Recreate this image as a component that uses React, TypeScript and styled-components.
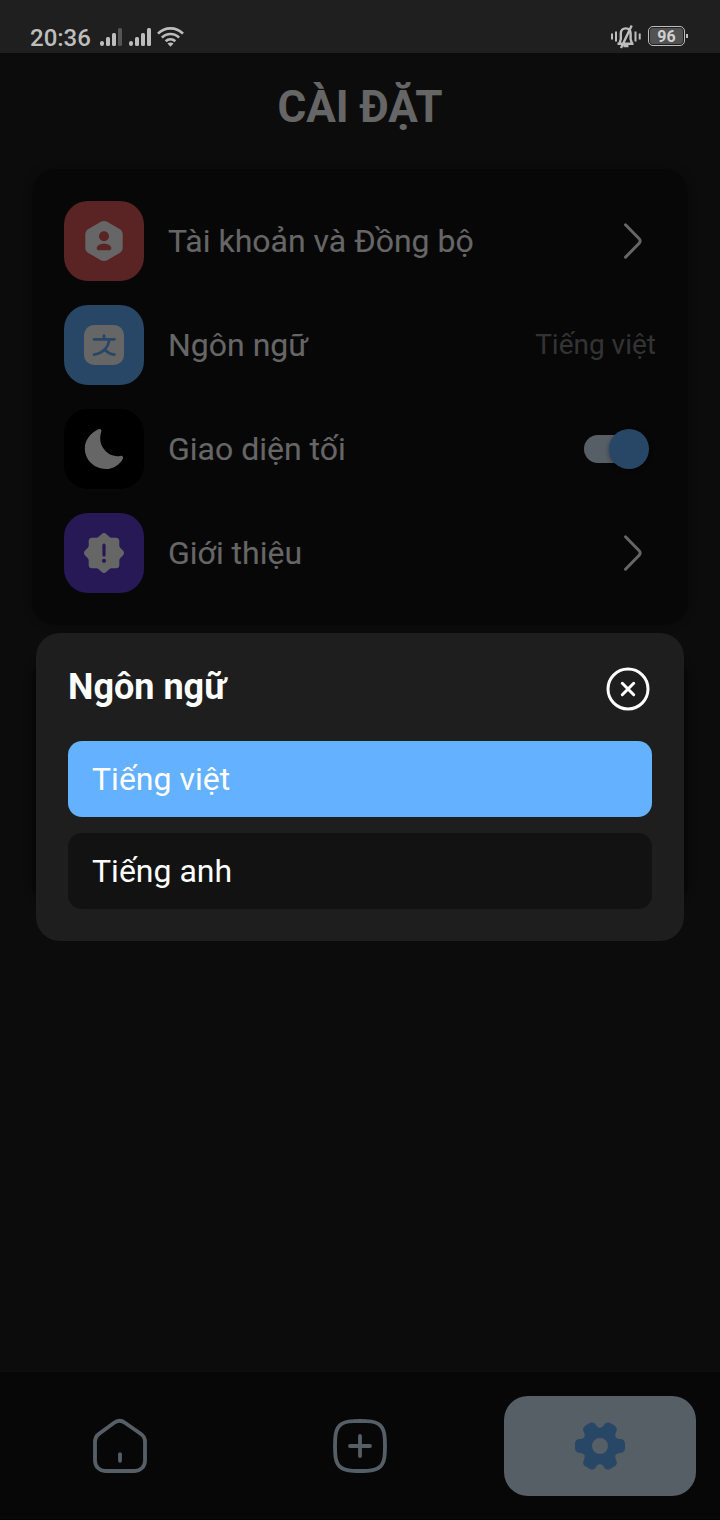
import React, { useState } from "react";
import styled, { createGlobalStyle } from "styled-components";

const GlobalStyle = createGlobalStyle`
  *, *::before, *::after { box-sizing: border-box; }
  html, body { margin: 0; padding: 0; background: #1e1e1e; }
  body, button, input { font-family: Roboto, "Noto Sans", sans-serif; }
  button { border: 0; padding: 0; margin: 0; background: none; color: inherit; cursor: pointer; }
`;

const Screen = styled.div`
  display: flex;
  flex-direction: column;
  min-height: 100vh;
  color: #ffffff;
`;

const StatusBar = styled.header`
  display: flex;
  justify-content: space-between;
  align-items: flex-start;
  height: 53px;
  padding: 25px 35px 0 30px;
  background: #1f1f1f;
  color: #bdbdbd;
`;

const StatusGroup = styled.div`
  display: flex;
  align-items: center;
  gap: 6px;

  svg { overflow: visible; }
`;

const Clock = styled.time`
  font-size: 24px;
  font-weight: 500;
  line-height: 26px;
  margin-right: 3px;
`;

const Battery = styled.div`
  position: relative;
  display: flex;
  width: 37px;
  height: 20px;
  margin-left: 1px;
  padding: 1px;
  border: 1px solid #bdbdbd;
  border-radius: 5px;

  &::after {
    content: "";
    position: absolute;
    right: -4px;
    top: 7px;
    width: 2px;
    height: 4px;
    background: #bdbdbd;
  }
`;

const BatteryLevel = styled.span`
  flex: 1;
  border-radius: 3px;
  background: #525252;
  color: #d0d0d0;
  font-size: 16px;
  font-weight: 700;
  line-height: 17px;
  text-align: center;
`;

const Body = styled.div`
  position: relative;
  display: flex;
  flex-direction: column;
  flex: 1;
  background: #1e1e1e;
`;

const Content = styled.main`
  display: flex;
  flex-direction: column;
  flex: 1;
  gap: 32px;
  padding: 28px 32px 32px;
`;

const PageTitle = styled.h1`
  margin: 0 0 4px;
  font-size: 44px;
  font-weight: 700;
  line-height: 52px;
  text-align: center;
`;

const Card = styled.section<{ $rows?: number }>`
  display: flex;
  flex-direction: column;
  gap: 24px;
  min-height: ${(p) => (p.$rows ? p.$rows * 104 + 40 : 0)}px;
  padding: 32px;
  border-radius: 24px;
  background: #121212;
  box-shadow: 0 0 10px rgba(0, 0, 0, 0.25);
`;

const rowLayout = `
  display: flex;
  align-items: center;
  gap: 24px;
  width: 100%;
  text-align: left;
`;

const RowButton = styled.button`
  ${rowLayout}
`;

const RowLabel = styled.label`
  ${rowLayout}
  cursor: pointer;
`;

const Tile = styled.span<{ $color: string }>`
  display: flex;
  align-items: center;
  justify-content: center;
  width: 80px;
  height: 80px;
  border-radius: 24px;
  background: ${(p) => p.$color};
`;

const RowText = styled.span`
  flex: 1;
  font-size: 32px;
  line-height: 40px;
`;

const RowValue = styled.span`
  color: #808080;
  font-size: 28px;
  line-height: 42px;
`;

const Switch = styled.input`
  appearance: none;
  position: relative;
  width: 58px;
  height: 28px;
  margin: 0 14px 0 0;
  border-radius: 14px;
  background: #d8ebff;
  cursor: pointer;

  &::before {
    content: "";
    position: absolute;
    top: -6px;
    left: -6px;
    width: 40px;
    height: 40px;
    border-radius: 50%;
    background: #cccccc;
    box-shadow: 0 2px 5px rgba(0, 0, 0, 0.4);
  }

  &:checked::before {
    left: 25px;
    background: #64b1ff;
  }
`;

const TabBar = styled.nav`
  display: grid;
  grid-template-columns: repeat(3, 1fr);
  gap: 48px;
  padding: 24px 24px 23px;
  border-bottom: 1px solid #000000;
  background: #121212;
`;

const Tab = styled.button<{ $active?: boolean }>`
  display: flex;
  align-items: center;
  justify-content: center;
  height: 100px;
  border-radius: 24px;
  background: ${(p) => (p.$active ? "#d8ebff" : "transparent")};
  color: ${(p) => (p.$active ? "#64b1ff" : "#d8ebff")};
`;

const Backdrop = styled.div`
  position: absolute;
  inset: 0;
  display: flex;
  align-items: center;
  justify-content: center;
  padding: 0 36px;
  background: rgba(0, 0, 0, 0.6);
`;

const Dialog = styled.div`
  flex: 1;
  display: flex;
  flex-direction: column;
  gap: 16px;
  padding: 32px;
  border-radius: 24px;
  background: #1e1e1e;
`;

const DialogHeader = styled.div`
  display: flex;
  align-items: flex-start;
  justify-content: space-between;
  margin-bottom: 12px;
`;

const DialogTitle = styled.h2`
  margin: 0;
  font-size: 36px;
  font-weight: 700;
  line-height: 44px;
`;

const CloseButton = styled.button`
  display: flex;
`;

const Option = styled.button<{ $selected: boolean }>`
  height: 76px;
  padding: 0 24px;
  border-radius: 14px;
  background: ${(p) => (p.$selected ? "#64b1ff" : "#121212")};
  color: #ffffff;
  font-size: 32px;
  line-height: 40px;
  text-align: left;
`;

const SignalIcon = ({ weak }: { weak?: boolean }) => (
  <svg width="23" height="20" viewBox="0 1 23 20" fill="currentColor" aria-hidden="true">
    <rect x="0" y="14" width="4" height="5" rx="2" />
    <rect x="6" y="10" width="4" height="9" rx="1.5" />
    <rect x="12" y="6" width="4" height="13" rx="1.5" />
    <rect x="18" y="1" width="4" height="18" rx="1.5" fill={weak ? "#555555" : "currentColor"} />
  </svg>
);

const WifiIcon = () => (
  <svg width="27" height="22" viewBox="1 1 27 22" fill="none" stroke="currentColor" strokeWidth="2.7" aria-hidden="true">
    <path d="M1 7.6C8 .6 19 .6 26 7.6M4.9 11.6c4.8-4.8 12.4-4.8 17.2 0M8.7 15.2c2.7-2.6 6.9-2.6 9.6 0" />
    <path d="M13.5 20.8l-3-3.2c1.6-1.5 4.4-1.5 6 0z" fill="currentColor" stroke="none" />
  </svg>
);

const MutedBellIcon = () => (
  <svg width="30" height="22" viewBox="0 0 30 22" fill="none" stroke="currentColor" strokeWidth="2" aria-hidden="true">
    <path d="M1 8.500v6M5 6.500v10M24.500 6.500v10M28.700 8.500v6" />
    <path
      d="M6.500 18.800h16M8.600 18l1.200-4V8.500C9.800 5 12 3.400 14.700 3.400s4.900 1.600 4.900 5.100V14l1.200 4M12.500 21h5M20.700.5L10 23"
      strokeWidth="2.400"
    />
  </svg>
);

const AccountIcon = () => (
  <svg width="48" height="48" viewBox="0 0 48 48" aria-hidden="true">
    <path
      fill="#ffffff"
      d="M20.9 4.800c1.900-1.100 4.300-1.100 6.200 0l12.500 7.200c1.900 1.100 3.100 3.100 3.100 5.300v13.400c0 2.200-1.200 4.200-3.100 5.300l-12.500 7.200c-1.900 1.100-4.300 1.100-6.200 0L8.400 36c-1.900-1.100-3.100-3.100-3.100-5.300V17.300c0-2.200 1.200-4.200 3.100-5.300z"
    />
    <circle cx="24" cy="19.300" r="5" fill="#e15a5a" />
    <path fill="#e15a5a" d="M16.700 31.200c0-2.700 3.300-4.500 7.300-4.500s7.300 1.800 7.300 4.500c0 1.200-.9 2-2 2H18.700c-1.100 0-2-.8-2-2z" />
  </svg>
);

const LanguageIcon = () => (
  <svg width="48" height="48" viewBox="0 0 48 48" aria-hidden="true">
    <rect x="4" y="4" width="40" height="40" rx="10" fill="#ffffff" />
    <path
      d="M14 18.300h20.500M24 14.600v3.500M29.200 18.500C28.500 26.800 22 32.700 14 33.600M25 28.800c2.500 2.700 5.600 4.600 9.400 4.900"
      fill="none"
      stroke="#64b1ff"
      strokeWidth="2.800"
      strokeLinecap="round"
    />
  </svg>
);

const MoonIcon = () => (
  <svg width="48" height="48" viewBox="0 0 48 48" aria-hidden="true">
    <path
      fill="#ffffff"
      d="M18.500 4.300c1.900-.8 3.300.5 2.800 2.300-1.700 5.400-1.700 11.400 2.200 17 4 5.800 10.500 8.600 16.800 7.300 2.100-.4 3.500 1.100 2.500 3C39.500 39.900 33.200 44 26 44 14.300 44 4.800 35 4.800 23.600c0-8.600 6-16.100 13.700-19.300z"
    />
  </svg>
);

const InfoIcon = () => (
  <svg width="48" height="48" viewBox="0 0 48 48" aria-hidden="true">
    <path
      fill="#ffffff"
      d="M21.800 4.900c1.300-1.200 3.100-1.200 4.400 0l3.100 2.900c.6.600 1.400.9 2.200.9h4.700c1.700 0 3.100 1.400 3.100 3.100v4.700c0 .8.300 1.600.9 2.200l2.900 3.100c1.200 1.300 1.200 3.100 0 4.400l-2.900 3.100c-.6.600-.9 1.400-.9 2.200v4.700c0 1.700-1.400 3.100-3.100 3.100h-4.700c-.8 0-1.600.3-2.200.9l-3.100 2.900c-1.300 1.200-3.100 1.200-4.400 0l-3.100-2.900c-.6-.6-1.400-.9-2.200-.9h-4.700c-1.700 0-3.100-1.400-3.100-3.100v-4.700c0-.8-.3-1.600-.9-2.200l-2.900-3.100c-1.200-1.300-1.200-3.100 0-4.400l2.900-3.100c.6-.6.9-1.400.9-2.200v-4.700c0-1.700 1.400-3.100 3.100-3.100h4.700c.8 0 1.600-.3 2.200-.9z"
    />
    <path d="M24 16.200v9.900" stroke="#633ed7" strokeWidth="3.200" strokeLinecap="round" />
    <circle cx="24" cy="31.800" r="2.100" fill="#633ed7" />
  </svg>
);

const ChevronIcon = () => (
  <svg width="48" height="48" viewBox="0 0 48 48" fill="none" stroke="#ffffff" strokeWidth="3" strokeLinecap="round" aria-hidden="true">
    <path d="M17.500 7.800l13.700 14a3.100 3.100 0 0 1 0 4.400l-13.700 14" />
  </svg>
);

const CloseIcon = () => (
  <svg width="48" height="48" viewBox="0 0 48 48" fill="none" stroke="#ffffff" strokeWidth="3" strokeLinecap="round" aria-hidden="true">
    <circle cx="24" cy="24" r="20" />
    <path d="M18.300 18.300l11.400 11.400M29.700 18.300L18.300 29.700" />
  </svg>
);

const HomeIcon = () => (
  <svg width="56" height="56" viewBox="0 0 56 56" fill="none" stroke="currentColor" strokeWidth="3.800" strokeLinecap="round" aria-hidden="true">
    <path d="M21.800 4.900c3.300-2.500 7.700-2.600 11.100-.2l15.800 11.100c2.700 1.900 4.300 4.300 4.300 7.700v19.200C53 48.400 48.400 53 42.700 53H13.300C7.600 53 3 48.400 3 42.700V23.600c0-3.300 1.200-5.500 3.800-7.500z" />
    <path d="M28 36.200v6.600" />
  </svg>
);

const AddIcon = () => (
  <svg width="56" height="56" viewBox="0 0 56 56" fill="none" stroke="currentColor" strokeWidth="3.800" strokeLinecap="round" aria-hidden="true">
    <path d="M3.200 21C3.600 8.500 8.500 3.600 21 3.200q7-.4 14 0C47.500 3.600 52.400 8.500 52.800 21q.4 7 0 14C52.400 47.500 47.500 52.400 35 52.800q-7 .4-14 0C8.500 52.400 3.600 47.500 3.200 35q-.4-7 0-14z" />
    <path d="M18 28h20M28 18v20" />
  </svg>
);

// One tooth of the gear pointing right, repeated every 60 degrees round the hub.
const toothPoints = [
  [15.6, -9], [17, -7.6], [18.4, -7], [20.400, -7],
  [23, -7], [25, -5], [25, -2.600],
  [25, -0.8], [25, 0.8], [25, 2.600],
  [25, 5], [23, 7], [20.400, 7],
  [18.4, 7], [17, 7.6], [15.6, 9],
];

const gearPath = Array.from({ length: 6 }, (_, i) => {
  const angle = (i * Math.PI) / 3;
  const points = toothPoints.map(([x, y]) => {
    const px = x * Math.cos(angle) - y * Math.sin(angle);
    const py = x * Math.sin(angle) + y * Math.cos(angle);
    return `${px.toFixed(2)} ${py.toFixed(2)}`;
  });
  return `${i === 0 ? "M" : "L"}${points[0]}C${points.slice(1).join(" ")}`;
}).join("");

const GearIcon = () => (
  <svg width="56" height="56" viewBox="-28 -28 56 56" fill="currentColor" fillRule="evenodd" aria-hidden="true">
    <path d={`${gearPath}ZM8 0A8 8 0 1 0 -8 0A8 8 0 1 0 8 0Z`} />
  </svg>
);

const languages = ["Tiếng việt", "Tiếng anh"];

export default function App() {
  const [language, setLanguage] = useState(languages[0]);
  const [dialogOpen, setDialogOpen] = useState(true);
  const [dark, setDark] = useState(true);

  return (
    <Screen lang="vi">
      <GlobalStyle />
      <StatusBar>
        <StatusGroup>
          <Clock>20:36</Clock>
          <SignalIcon weak />
          <SignalIcon />
          <WifiIcon />
        </StatusGroup>
        <StatusGroup>
          <MutedBellIcon />
          <Battery>
            <BatteryLevel>96</BatteryLevel>
          </Battery>
        </StatusGroup>
      </StatusBar>
      <Body>
        <Content>
          <PageTitle>CÀI ĐẶT</PageTitle>
          <Card>
            <RowButton type="button">
              <Tile $color="#e15a5a"><AccountIcon /></Tile>
              <RowText>Tài khoản và Đồng bộ</RowText>
              <ChevronIcon />
            </RowButton>
            <RowButton type="button" onClick={() => setDialogOpen(true)}>
              <Tile $color="#64b1ff"><LanguageIcon /></Tile>
              <RowText>Ngôn ngữ</RowText>
              <RowValue>{language}</RowValue>
            </RowButton>
            <RowLabel htmlFor="dark-mode">
              <Tile $color="#000000"><MoonIcon /></Tile>
              <RowText>Giao diện tối</RowText>
              <Switch id="dark-mode" type="checkbox" checked={dark} onChange={(e) => setDark(e.target.checked)} />
            </RowLabel>
            <RowButton type="button">
              <Tile $color="#633ed7"><InfoIcon /></Tile>
              <RowText>Giới thiệu</RowText>
              <ChevronIcon />
            </RowButton>
          </Card>
          <Card $rows={2} />
        </Content>
        <TabBar>
          <Tab type="button" aria-label="Trang chủ"><HomeIcon /></Tab>
          <Tab type="button" aria-label="Thêm"><AddIcon /></Tab>
          <Tab type="button" aria-label="Cài đặt" $active><GearIcon /></Tab>
        </TabBar>
        {dialogOpen && (
          <Backdrop>
            <Dialog role="dialog" aria-modal="true" aria-labelledby="language-title">
              <DialogHeader>
                <DialogTitle id="language-title">Ngôn ngữ</DialogTitle>
                <CloseButton type="button" aria-label="Đóng" onClick={() => setDialogOpen(false)}>
                  <CloseIcon />
                </CloseButton>
              </DialogHeader>
              {languages.map((name) => (
                <Option key={name} type="button" $selected={name === language} onClick={() => setLanguage(name)}>
                  {name}
                </Option>
              ))}
            </Dialog>
          </Backdrop>
        )}
      </Body>
    </Screen>
  );
}
